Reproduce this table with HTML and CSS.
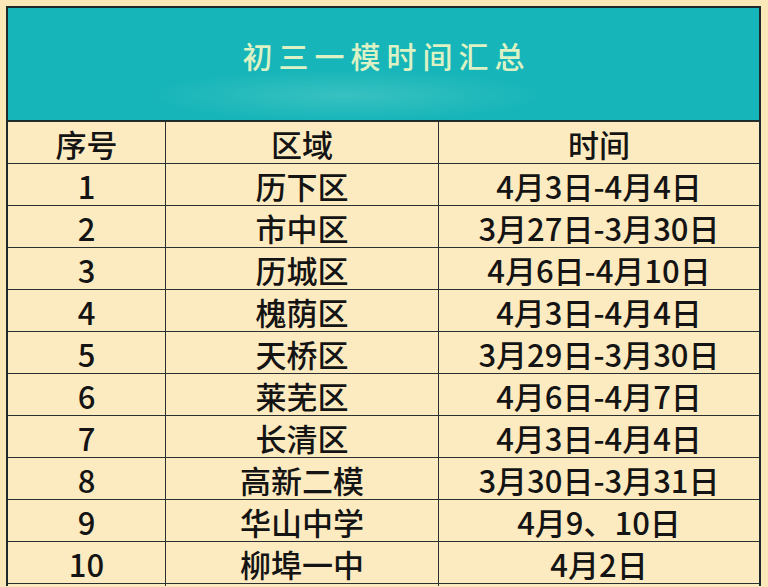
FILE: index.html
```html
<!DOCTYPE html>
<html lang="zh-CN">
<head>
<meta charset="utf-8">
<title>初三一模时间汇总</title>
<link rel="stylesheet" href="styles.css">
</head>
<body>
<div class="sheet">
  <div class="title"><span>初三一模时间汇总</span></div>
  <div class="cell">序号</div><div class="cell">区域</div><div class="cell">时间</div>
  <div class="cell">1</div><div class="cell">历下区</div><div class="cell">4月3日-4月4日</div>
  <div class="cell">2</div><div class="cell">市中区</div><div class="cell">3月27日-3月30日</div>
  <div class="cell">3</div><div class="cell">历城区</div><div class="cell">4月6日-4月10日</div>
  <div class="cell">4</div><div class="cell">槐荫区</div><div class="cell">4月3日-4月4日</div>
  <div class="cell">5</div><div class="cell">天桥区</div><div class="cell">3月29日-3月30日</div>
  <div class="cell">6</div><div class="cell">莱芜区</div><div class="cell">4月6日-4月7日</div>
  <div class="cell">7</div><div class="cell">长清区</div><div class="cell">4月3日-4月4日</div>
  <div class="cell">8</div><div class="cell">高新二模</div><div class="cell">3月30日-3月31日</div>
  <div class="cell">9</div><div class="cell">华山中学</div><div class="cell">4月9、10日</div>
  <div class="cell">10</div><div class="cell">柳埠一中</div><div class="cell">4月2日</div>
  <div class="cell stub"></div><div class="cell stub"></div><div class="cell stub"></div>
</div>
</body>
</html>
```
FILE: styles.css
```css
html, body {
  margin: 0;
  padding: 0;
  background: #fbe8b9;
  overflow: hidden;
  height: 587px;
}
.sheet {
  margin: 6px 0 0 6px;
  width: 755px;
  box-sizing: border-box;
  border: 2px solid #1c2a2c;
  border-bottom: 0;
  background: #2a3030;
  display: grid;
  grid-template-columns: 157px 272px 320px;
  grid-template-rows: 113px repeat(11, 41px) 2px;
  gap: 1px;
  font-family: "Noto Sans CJK SC", "Noto Sans", sans-serif;
}
.title {
  grid-column: 1 / -1;
  border-bottom: 1px solid #1c2a2c;
  background: radial-gradient(ellipse 200px 26px at 45% 78%, rgba(120, 215, 205, 0.35), rgba(120, 215, 205, 0) 100%), #16b5b9;
  display: flex;
  justify-content: center;
  align-items: center;
  padding-bottom: 18px;
  box-sizing: border-box;
}
.title span {
  color: #dcf2c4;
  font-size: 30px;
  letter-spacing: 6px;
  margin-right: -6px;
  font-weight: 500;
  line-height: 1;
}
.cell {
  background: #fcebc0;
  color: #141414;
  font-size: 31px;
  font-weight: 500;
  line-height: 39px;
  padding-top: 2px;
  box-sizing: border-box;
  text-align: center;
  white-space: nowrap;
}
.stub {
  padding: 0;
}
```
